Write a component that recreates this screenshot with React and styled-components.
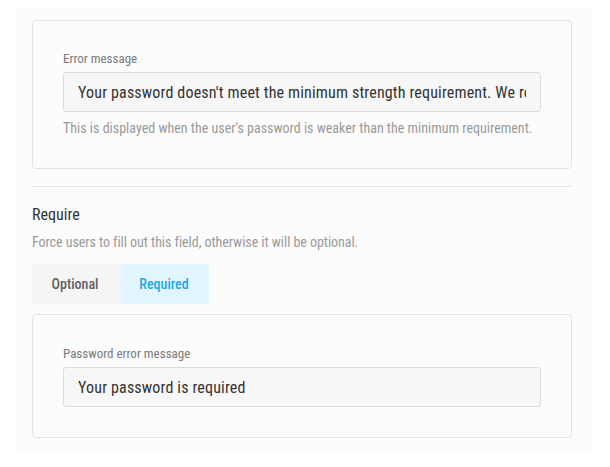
import React from "react";
import styled, { createGlobalStyle } from "styled-components";

const Global = createGlobalStyle`
  html, body { margin: 0; padding: 0; background: #ffffff; }
  body { font-family: Roboto, "Liberation Sans", Arial, sans-serif; font-stretch: 87.5%; }
  * { box-sizing: border-box; }
`;

const Panel = styled.div`
  margin: 7px 18px 18px 16px;
  padding: 13px 20px 12px 16px;
  background: #fcfcfc;
`;

const Card = styled.div`
  border: 1px solid #e4e4e4;
  border-radius: 4px;
  background: #fcfcfc;
  padding: ${(p) => p.$pad || "30px 30px 32px"};
`;

const Label = styled.div`
  font-size: 13px;
  line-height: 15px;
  color: #7a7a7a;
  margin-bottom: 6px;
`;

const Input = styled.input`
  display: block;
  width: 100%;
  height: 40px;
  padding: 0 14px;
  border: 1px solid #dcdcdc;
  border-radius: 3px;
  background: #f7f7f7;
  font-family: Roboto, "Liberation Sans", Arial, sans-serif;
  font-stretch: 87.5%;
  font-size: 16px;
  letter-spacing: 0.16px;
  color: #333333;
  outline: none;
`;

const Helper = styled.div`
  margin-top: 8px;
  font-size: 14px;
  line-height: 16px;
  color: #9a9a9a;
`;

const Divider = styled.hr`
  margin: 17px 0 19px;
  border: 0;
  border-top: 1px solid #e6e6e6;
  height: 0;
`;

const Title = styled.div`
  font-size: 16px;
  line-height: 18px;
  color: #333333;
`;

const Desc = styled.div`
  margin-top: 10px;
  font-size: 14px;
  line-height: 16px;
  letter-spacing: -0.05px;
  color: #9a9a9a;
`;

const Segmented = styled.div`
  display: flex;
  gap: 1px;
  margin: 14px 0 10px;
`;

const Segment = styled.button`
  height: 40px;
  width: ${(p) => (p.$active ? "90px" : "86px")};
  padding: 0;
  border: 0;
  font-family: Roboto, "Liberation Sans", Arial, sans-serif;
  font-stretch: 87.5%;
  font-size: 14px;
  font-weight: 500;
  cursor: pointer;
  background: ${(p) => (p.$active ? "#e1f5fe" : "#f5f5f5")};
  color: ${(p) => (p.$active ? "#22a8e4" : "#616161")};
  &:first-child { border-radius: 3px 0 0 3px; }
  &:last-child { border-radius: 0 3px 3px 0; }
`;

export default function App() {
  return (
    <>
      <Global />
      <Panel>
        <Card>
          <Label>Error message</Label>
          <Input
            readOnly
            value="Your password doesn't meet the minimum strength requirement. We recommend using a longer password."
          />
          <Helper>
            This is displayed when the user's password is weaker than the minimum requirement.
          </Helper>
        </Card>
        <Divider />
        <Title>Require</Title>
        <Desc>Force users to fill out this field, otherwise it will be optional.</Desc>
        <Segmented>
          <Segment>Optional</Segment>
          <Segment $active>Required</Segment>
        </Segmented>
        <Card $pad="31px 30px 30px">
          <Label>Password error message</Label>
          <Input readOnly value="Your password is required" />
        </Card>
      </Panel>
    </>
  );
}
